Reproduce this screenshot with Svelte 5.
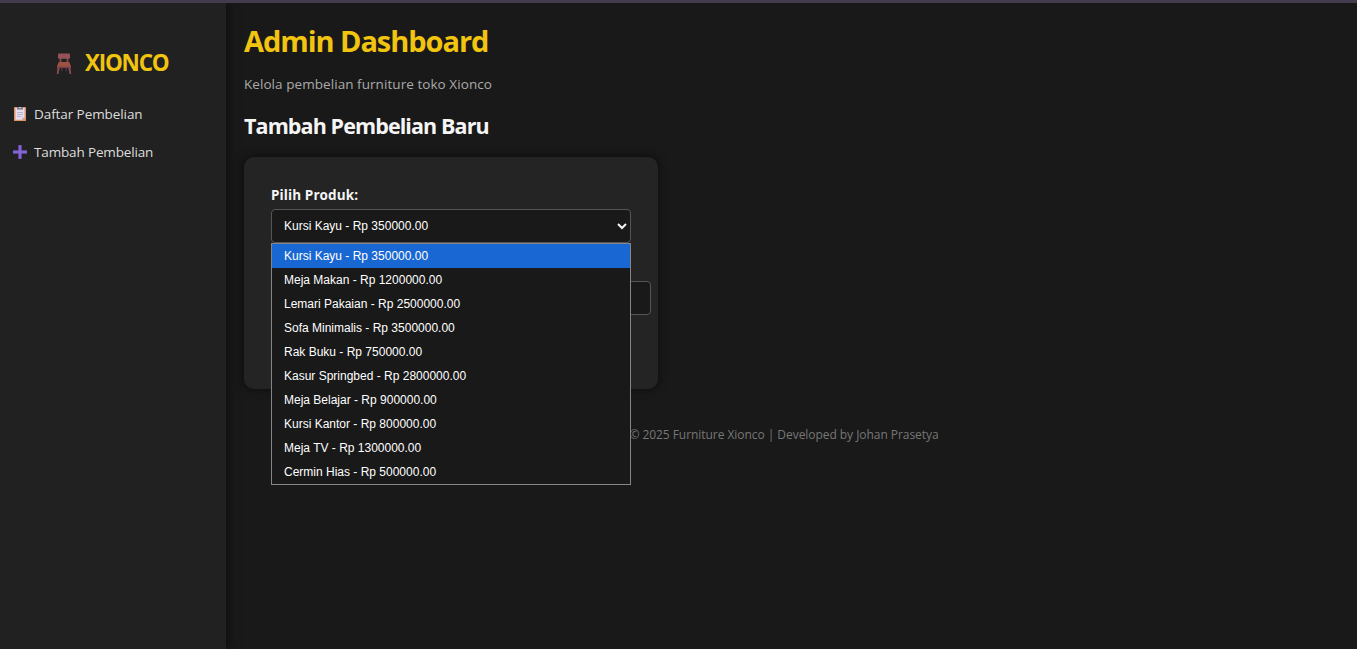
<script>
  const products = [
    ['Kursi Kayu', '350000.00'],
    ['Meja Makan', '1200000.00'],
    ['Lemari Pakaian', '2500000.00'],
    ['Sofa Minimalis', '3500000.00'],
    ['Rak Buku', '750000.00'],
    ['Kasur Springbed', '2800000.00'],
    ['Meja Belajar', '900000.00'],
    ['Kursi Kantor', '800000.00'],
    ['Meja TV', '1300000.00'],
    ['Cermin Hias', '500000.00']
  ].map(([name, price]) => `${name} - Rp ${price}`);
  let selected = $state(0);
</script>

<div class="page">
  <aside>
    <div class="brand">
      <svg width="16" height="22" viewBox="0 0 16 22">
        <path d="M3.500 5h2v5h-2zM10.500 5h2v5h-2z" fill="#86454b" />
        <path d="M2 1.600Q2 .6 3 .6h10q1 0 1 1V4.700q0 1-1 1H3q-1 0-1-1z" fill="#965256" />
        <path d="M5 14.500h1.500V18H5zM9.500 14.500H11V18H9.500z" fill="#4b3140" />
        <path d="M1.500 14h2.300L2.500 21H.8zM12.200 14h2.300l.7 7h-1.700z" fill="#8a4955" />
        <path d="M2.800 9h10.400l1.800 4.200v1.300H1v-1.300z" fill="#9c5343" />
        <path d="M1 13.500h14v1.300H1z" fill="#824246" />
      </svg>
      <span>XIONCO</span>
    </div>
    <nav>
      <a href="#daftar">
        <svg width="14" height="16" viewBox="0 0 14 16">
          <rect x="1" y="1" width="12" height="14" rx=".5" fill="#dc956a" />
          <path d="M2.500 2h9v9.500L9.300 13.800H2.500z" fill="#e6deee" />
          <path d="M9.300 13.800v-2.300h2.200z" fill="#b5a5ca" />
          <path d="M4 1h6v2.600H4z" fill="#857b90" />
          <path d="M6 1h2v1H6z" fill="#d5cdda" />
          <path d="M4 6.500h6M4 8.500h6M4 10.500h4" stroke="#b5adc2" stroke-width=".9" />
        </svg>
        <span class="first">Daftar Pembelian</span>
      </a>
      <a href="#tambah">
        <svg width="14" height="16" viewBox="0 0 14 16">
          <path d="M5.300 1h3.400v5.300H14v3.400H8.700V15H5.300V9.700H0V6.300h5.300z" fill="#7550c8" />
          <path d="M7 1.300v13.400M.3 8h13.400" fill="none" stroke="#9078d0" stroke-width="1" />
        </svg>
        <span>Tambah Pembelian</span>
      </a>
    </nav>
  </aside>

  <main>
    <h1>Admin Dashboard</h1>
    <p class="lead">Kelola pembelian furniture toko Xionco</p>
    <h2>Tambah Pembelian Baru</h2>
    <form>
      <div class="label">Pilih Produk:</div>
      <div class="picker">
        <div class="select">
          <span>{products[selected]}</span>
          <svg width="10" height="8" viewBox="0 0 10 8"><path d="M1 2l4 4 4-4" fill="none" stroke="#f5f5f5" stroke-width="2" /></svg>
        </div>
        <div class="menu" role="listbox">
          {#each products as product, i}
            <div class="option" class:active={i === selected} role="option" tabindex="-1" aria-selected={i === selected} onclick={() => (selected = i)} onkeydown={() => {}}>{product}</div>
          {/each}
        </div>
      </div>
      <div class="quantity"></div>
    </form>
    <footer><span>© 2025 Furniture Xionco | Developed by Johan Prasetya</span></footer>
  </main>
</div>

<style>
  :global(body) { margin: 0; background: #191919; overflow: hidden; }
  .page {
    display: flex; box-sizing: border-box; height: 649px;
    border-top: 3px solid #443b4e;
    background: #191919; color: #f5f5f5;
    font-family: "Open Sans", "Noto Sans", sans-serif;
    white-space: nowrap;
  }
  aside { width: 226px; flex: none; background: #212121; box-shadow: 2px 0 10px rgba(0, 0, 0, .5); clip-path: inset(0 -20px 0 0); }
  .brand { display: flex; align-items: center; gap: 13px; margin: 44px 0 0 56px; height: 32px; font-size: 22.500px; font-weight: 700; color: #f1c40f; }
  .brand svg { margin-top: 2px; }
  .brand span { letter-spacing: -1.25px; margin-top: -1px; }
  nav { margin-top: 16px; }
  nav a { display: flex; align-items: center; gap: 7px; height: 38px; padding-left: 13px; color: #ddd; font-size: 13.500px; text-decoration: none; }
  nav span { letter-spacing: -0.15px; }
  nav .first { letter-spacing: -0.08px; }
  main { flex: 1; padding: 0 18px; }
  h1 { margin: 18px 0 0; font-size: 29px; line-height: 40px; font-weight: 700; color: #f1c40f; letter-spacing: -1.05px; }
  .lead { margin: 13px 0 0; font-size: 13.500px; line-height: 20px; color: #aaa; letter-spacing: .06px; }
  h2 { margin: 17px 0 0; font-size: 21.500px; line-height: 30px; font-weight: 700; letter-spacing: -0.9px; }
  form { box-sizing: border-box; width: 414px; height: 232px; margin-top: 16px; padding: 27px; border-radius: 10px; background: #242424; box-shadow: 0 0 10px rgba(0, 0, 0, .6); }
  .label { font-size: 13.500px; line-height: 22px; font-weight: 700; letter-spacing: .1px; margin-bottom: 3px; }
  .picker { position: relative; width: 360px; font: 12px/24px "Liberation Sans", Arial, sans-serif; color: #fff; }
  .select { box-sizing: border-box; height: 34px; display: flex; align-items: center; justify-content: space-between; padding: 0 3px 0 12px; border: 1px solid #555; border-radius: 4px; background: #191919; }
  .menu { position: absolute; z-index: 2; top: 34px; left: 0; box-sizing: border-box; width: 360px; height: 242px; border: 1px solid #858585; background: #191919; }
  .option { padding-left: 12px; height: 24px; }
  .active { background: #1967d2; }
  .quantity { box-sizing: border-box; width: 380px; height: 34px; margin-top: 38px; border: 1px solid #555; border-radius: 4px; background: #191919; }
  footer { margin-top: 36px; padding-right: 15px; text-align: center; font-size: 12px; line-height: 20px; color: #777; letter-spacing: -0.05px; }
</style>
